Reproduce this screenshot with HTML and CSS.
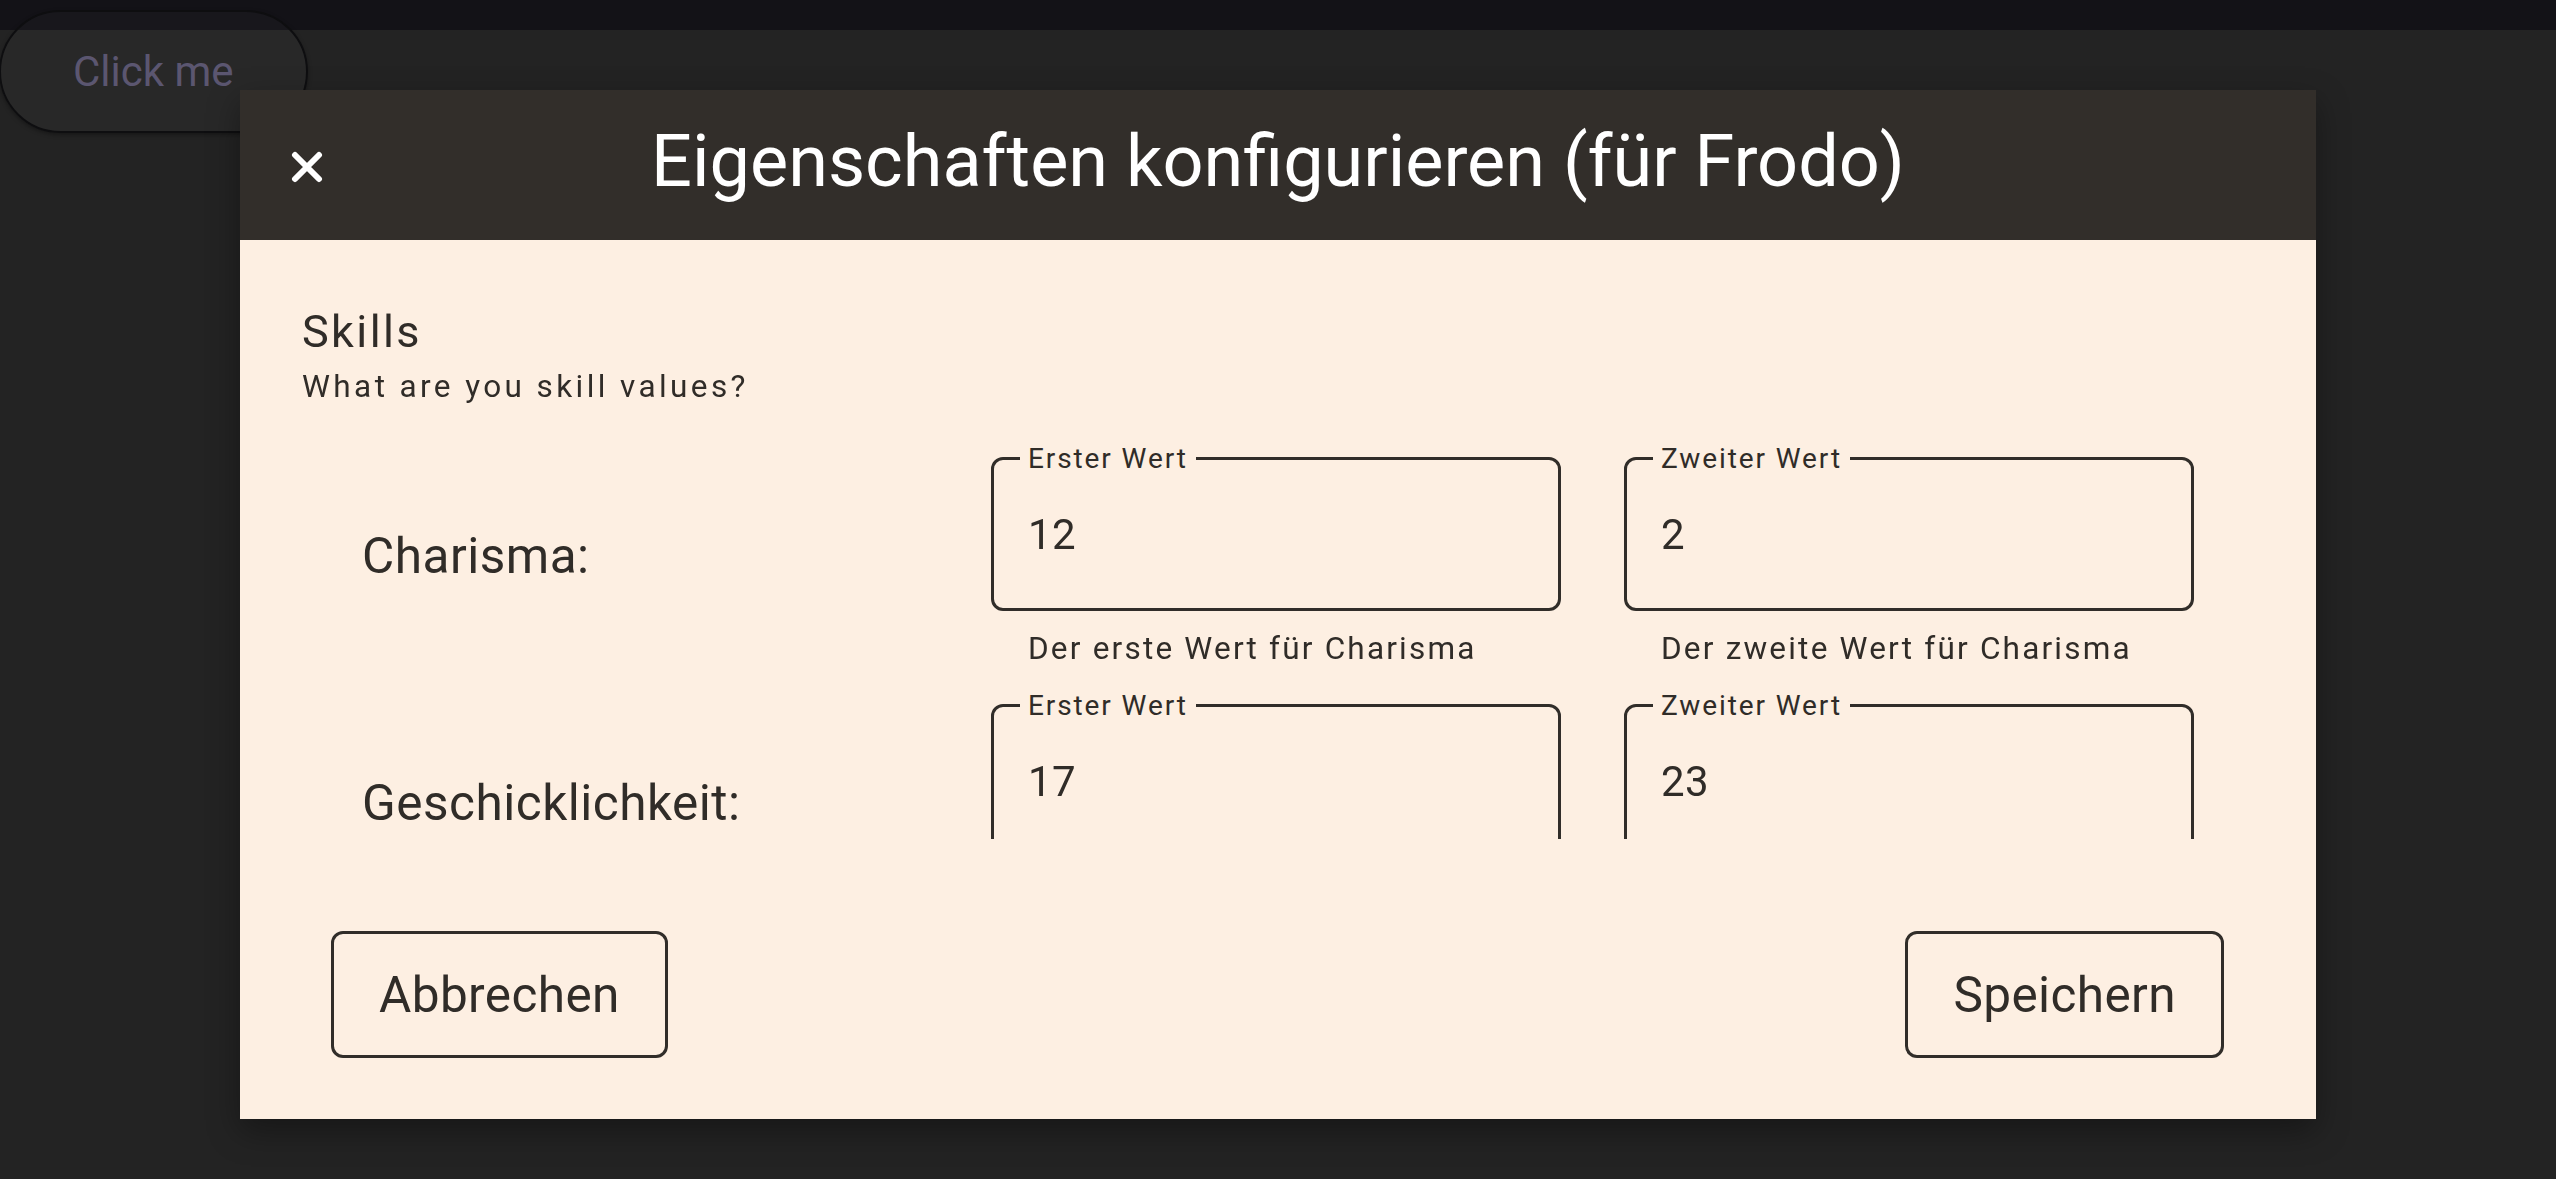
FILE: index.html
```html
<!DOCTYPE html>
<html lang="en">
<head>
  <meta charset="UTF-8">
  <meta name="viewport" content="width=device-width, initial-scale=1.0">
  <title>Eigenschaften konfigurieren</title>
  <link rel="stylesheet" href="styles.css">
</head>
<body>
  <!-- App behind the dialog -->
  <div class="app-bar"></div>
  <main class="app-main"></main>
  <button class="pill-btn" type="button">Click me</button>

  <!-- Dialog -->
  <div class="scrim">
    <div class="dialog">
      <div class="dialog-head">
        <button class="close-btn" type="button" aria-label="Schließen">
          <svg width="32" height="32" viewBox="0 0 32 32">
            <path d="M4 4 L28 28 M28 4 L4 28" stroke="#fff" stroke-width="6" stroke-linecap="round" fill="none"/>
          </svg>
        </button>
        <h1 class="dialog-title">Eigenschaften konfigurieren (für Frodo)</h1>
        <span></span>
      </div>

      <div class="dialog-body">
        <h2 class="section-title">Skills</h2>
        <p class="section-sub">What are you skill values?</p>

        <!-- Charisma -->
        <div class="skill-row">
          <div class="skill-name">Charisma:</div>
          <div class="field">
            <div class="field-box">
              <span class="field-label">Erster Wert</span>
              <span class="field-value">12</span>
            </div>
            <div class="field-help">Der erste Wert für Charisma</div>
          </div>
          <div class="field">
            <div class="field-box">
              <span class="field-label">Zweiter Wert</span>
              <span class="field-value">2</span>
            </div>
            <div class="field-help">Der zweite Wert für Charisma</div>
          </div>
        </div>

        <!-- Geschicklichkeit (scrolled, help text below the fold) -->
        <div class="skill-row">
          <div class="skill-name">Geschicklichkeit:</div>
          <div class="field">
            <div class="field-box">
              <span class="field-label">Erster Wert</span>
              <span class="field-value">17</span>
            </div>
            <div class="field-help"></div>
          </div>
          <div class="field">
            <div class="field-box">
              <span class="field-label">Zweiter Wert</span>
              <span class="field-value">23</span>
            </div>
            <div class="field-help"></div>
          </div>
        </div>
      </div>

      <div class="dialog-actions">
        <button class="btn" type="button">Abbrechen</button>
        <button class="btn" type="button">Speichern</button>
      </div>
    </div>
  </div>
</body>
</html>
```

FILE: styles.css
```css
/* Reset */
body, html {
  margin: 0;
  padding: 0;
  height: 100%;
  font-family: Roboto, "Noto Sans", Arial, sans-serif;
}

body {
  background-color: #232323;
  overflow: hidden;
}

/* App behind the dialog */
.app-bar {
  height: 30px;
  background-color: #131217;
}

.pill-btn {
  position: absolute;
  top: 10px;
  left: -1px;
  width: 309px;
  height: 123px;
  box-sizing: border-box;
  padding: 0 0 0 72px;
  border: 2px solid #0e0e10;
  border-radius: 62px;
  background-color: rgba(255, 255, 255, 0.025);
  box-shadow: 0 2px 4px rgba(0, 0, 0, 0.35);
  color: #5b5670;
  font-family: Roboto, sans-serif;
  font-size: 42px;
  text-align: left;
}

/* Dialog */
.scrim {
  position: fixed;
  inset: 0;
  display: flex;
  justify-content: center;
  align-items: flex-start;
  padding-top: 90px;
}

.dialog {
  width: 2076px;
  height: 1029px;
  display: flex;
  flex-direction: column;
  background-color: #fdefe2;
  color: #302c28;
  box-shadow: 0 12px 30px rgba(0, 0, 0, 0.35);
}

.dialog-head {
  height: 150px;
  flex-shrink: 0;
  display: grid;
  grid-template-columns: 1fr auto 1fr;
  align-items: center;
  padding: 0 51px;
  background-color: #322e2a;
}

.close-btn {
  justify-self: start;
  width: 32px;
  height: 32px;
  margin-top: 3px;
  padding: 0;
  border: none;
  background: none;
}

.close-btn svg {
  display: block;
}

.dialog-title {
  margin: 0 0 7px;
  color: #fff;
  font-size: 72px;
  font-weight: 400;
  white-space: nowrap;
}

.dialog-body {
  height: 599px;
  flex-shrink: 0;
  box-sizing: border-box;
  padding: 65px 0 0 62px;
  overflow: hidden;
}

.section-title {
  margin: 0;
  font-size: 45px;
  font-weight: 400;
  line-height: 54px;
  letter-spacing: 2.4px;
}

.section-sub {
  margin: 8px 0 0;
  font-size: 31.5px;
  line-height: 40px;
  letter-spacing: 3.4px;
}

.skill-row {
  display: grid;
  grid-template-columns: 626px 570px 570px;
  column-gap: 63px;
  align-items: center;
  margin-top: 20px;
}

.section-sub + .skill-row {
  margin-top: 35px;
}

.skill-name {
  padding-left: 60px;
  font-size: 49.5px;
  letter-spacing: 0.5px;
  white-space: nowrap;
}

.field {
  padding-top: 15px;
}

.field-box {
  position: relative;
  height: 154px;
  box-sizing: border-box;
  display: flex;
  align-items: center;
  padding-left: 34px;
  border: 3px solid #312d29;
  border-radius: 12px;
}

.field-label {
  position: absolute;
  top: -18px;
  left: 26px;
  padding: 0 8px;
  background-color: #fdefe2;
  font-size: 28px;
  line-height: 34px;
  letter-spacing: 1.9px;
}

.field-value {
  font-size: 42px;
  letter-spacing: 0.5px;
}

.field-help {
  height: 40px;
  margin-top: 18px;
  padding-left: 37px;
  font-size: 31.5px;
  line-height: 40px;
  letter-spacing: 2.2px;
  white-space: nowrap;
}

.dialog-actions {
  flex: 1;
  display: flex;
  justify-content: space-between;
  align-items: flex-start;
  padding: 92px 92px 0 91px;
}

.btn {
  height: 127px;
  box-sizing: border-box;
  padding: 0 45px;
  border: 3px solid #312d29;
  border-radius: 12px;
  background: none;
  color: #302c28;
  font-family: Roboto, sans-serif;
  font-size: 49.5px;
  letter-spacing: 0.4px;
}
```
